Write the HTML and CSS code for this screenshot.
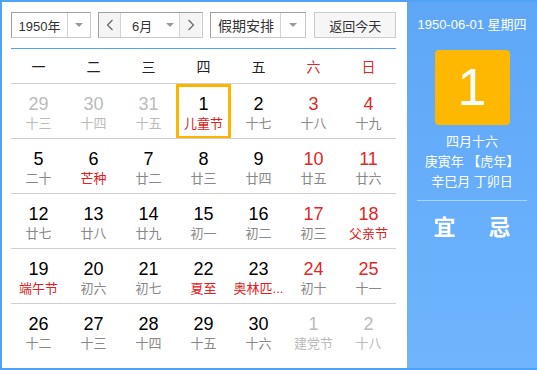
FILE: index.html
```html
<!DOCTYPE html>
<html lang="zh-CN">
<head>
    <meta charset="UTF-8">
    <title>万年历</title>
    <link rel="stylesheet" href="styles.css">
</head>
<body>
    <div class="calendar">
        <div class="main">
            <div class="toolbar">
                <div class="select year-select">
                    <span class="select-text">1950年</span>
                    <span class="select-arrow"><i class="caret"></i></span>
                </div>
                <div class="month-group">
                    <span class="nav-btn">
                        <svg width="8" height="12" viewBox="0 0 8 12"><polyline points="6.5,1 1.5,6 6.5,11" fill="none" stroke="#666" stroke-width="1.2"/></svg>
                    </span>
                    <span class="month-text">6月</span>
                    <span class="month-arrow"><i class="caret"></i></span>
                    <span class="nav-btn next">
                        <svg width="8" height="12" viewBox="0 0 8 12"><polyline points="1.5,1 6.5,6 1.5,11" fill="none" stroke="#666" stroke-width="1.2"/></svg>
                    </span>
                </div>
                <div class="select holiday-select">
                    <span class="select-text">假期安排</span>
                    <span class="select-arrow"><i class="caret"></i></span>
                </div>
                <button class="today-btn">返回今天</button>
            </div>

            <div class="grid">
                <div class="weekdays">
                    <span>一</span><span>二</span><span>三</span><span>四</span><span>五</span>
                    <span class="red">六</span><span class="red">日</span>
                </div>

                <div class="week">
                    <div class="day other"><b>29</b><small>十三</small></div>
                    <div class="day other"><b>30</b><small>十四</small></div>
                    <div class="day other"><b>31</b><small>十五</small></div>
                    <div class="day selected"><b>1</b><small class="fest">儿童节</small></div>
                    <div class="day"><b>2</b><small>十七</small></div>
                    <div class="day weekend"><b>3</b><small>十八</small></div>
                    <div class="day weekend"><b>4</b><small>十九</small></div>
                </div>
                <div class="week">
                    <div class="day"><b>5</b><small>二十</small></div>
                    <div class="day"><b>6</b><small class="fest">芒种</small></div>
                    <div class="day"><b>7</b><small>廿二</small></div>
                    <div class="day"><b>8</b><small>廿三</small></div>
                    <div class="day"><b>9</b><small>廿四</small></div>
                    <div class="day weekend"><b>10</b><small>廿五</small></div>
                    <div class="day weekend"><b>11</b><small>廿六</small></div>
                </div>
                <div class="week">
                    <div class="day"><b>12</b><small>廿七</small></div>
                    <div class="day"><b>13</b><small>廿八</small></div>
                    <div class="day"><b>14</b><small>廿九</small></div>
                    <div class="day"><b>15</b><small>初一</small></div>
                    <div class="day"><b>16</b><small>初二</small></div>
                    <div class="day weekend"><b>17</b><small>初三</small></div>
                    <div class="day weekend"><b>18</b><small class="fest">父亲节</small></div>
                </div>
                <div class="week">
                    <div class="day"><b>19</b><small class="fest">端午节</small></div>
                    <div class="day"><b>20</b><small>初六</small></div>
                    <div class="day"><b>21</b><small>初七</small></div>
                    <div class="day"><b>22</b><small class="fest">夏至</small></div>
                    <div class="day"><b>23</b><small class="fest">奥林匹...</small></div>
                    <div class="day weekend"><b>24</b><small>初十</small></div>
                    <div class="day weekend"><b>25</b><small>十一</small></div>
                </div>
                <div class="week">
                    <div class="day"><b>26</b><small>十二</small></div>
                    <div class="day"><b>27</b><small>十三</small></div>
                    <div class="day"><b>28</b><small>十四</small></div>
                    <div class="day"><b>29</b><small>十五</small></div>
                    <div class="day"><b>30</b><small>十六</small></div>
                    <div class="day other"><b>1</b><small>建党节</small></div>
                    <div class="day other"><b>2</b><small>十八</small></div>
                </div>
            </div>
        </div>

        <div class="side">
            <div class="side-date">1950-06-01 星期四</div>
            <div class="big-day">1</div>
            <div class="lunar">
                <div>四月十六</div>
                <div>庚寅年 【虎年】</div>
                <div>辛巳月 丁卯日</div>
            </div>
            <div class="side-line"></div>
            <div class="yi-ji"><span>宜</span><span>忌</span></div>
        </div>
    </div>
</body>
</html>
```

FILE: styles.css
```css
* {
    box-sizing: border-box;
}

body {
    margin: 0;
    font-family: "Liberation Sans", Arial, "Noto Sans CJK SC", sans-serif;
    color: #333;
    background: #fff;
}

.calendar {
    display: flex;
    width: 537px;
    height: 370px;
    border: 2px solid #4fa2f6;
    border-right: none;
}

.main {
    width: 405px;
    padding: 10px 11px 0 9px;
    background: #fff;
}

/* toolbar */
.toolbar {
    display: flex;
    height: 26px;
    font-size: 13px;
}

.select {
    display: flex;
    height: 26px;
    border: 1px solid #c8c8c8;
    border-top-color: #a0a0a0;
    border-left-color: #a0a0a0;
    background: #fff;
}

.select-text {
    display: flex;
    align-items: center;
    justify-content: center;
    border-right: 1px solid #d4d4d4;
}

.select-arrow {
    display: flex;
    align-items: center;
    justify-content: center;
}

.caret {
    width: 0;
    height: 0;
    border-left: 4px solid transparent;
    border-right: 4px solid transparent;
    border-top: 4px solid #999;
}

.year-select {
    width: 80px;
}

.year-select .select-text {
    width: 56px;
}

.year-select .select-arrow {
    width: 22px;
}

.month-group {
    display: flex;
    width: 106px;
    height: 26px;
    margin-left: 7px;
    border: 1px solid #c8c8c8;
    border-top-color: #a0a0a0;
    border-left-color: #a0a0a0;
}

.nav-btn {
    display: flex;
    align-items: center;
    justify-content: center;
    width: 22px;
    background: #f4f4f4;
    border-right: 1px solid #d4d4d4;
}

.nav-btn.next {
    border-right: none;
    border-left: 1px solid #d4d4d4;
}

.month-text {
    display: flex;
    align-items: center;
    padding-left: 11px;
    width: 40px;
}

.month-arrow {
    display: flex;
    align-items: center;
    justify-content: center;
    width: 18px;
}

.holiday-select {
    width: 96px;
    margin-left: 7px;
}

.holiday-select .select-text {
    width: 70px;
    font-size: 14px;
}

.holiday-select .select-arrow {
    width: 24px;
}

.today-btn {
    width: 82px;
    height: 26px;
    margin-left: 8px;
    padding: 0;
    border: 1px solid #ccc;
    background: #f6f6f6;
    color: #333;
    font-family: inherit;
    font-size: 13px;
}

/* grid */
.grid {
    margin-top: 10px;
    border-top: 1px solid #4fa2f6;
}

.weekdays {
    display: grid;
    grid-template-columns: repeat(7, 55px);
    height: 34px;
    align-items: center;
    font-size: 14px;
    text-align: center;
    color: #222;
}

.red {
    color: #e02828;
}

.week {
    display: grid;
    grid-template-columns: repeat(7, 55px);
    height: 55px;
    border-top: 1px solid #cfcfcf;
}

.day {
    display: flex;
    flex-direction: column;
    align-items: center;
    padding-top: 10px;
}

.day b {
    font-weight: normal;
    font-size: 18px;
    line-height: 20px;
    color: #000;
}

.day small {
    font-size: 13px;
    line-height: 17px;
    margin-top: 1px;
    color: #888;
    white-space: nowrap;
}

.day.weekend b {
    color: #e02828;
}

.day small.fest {
    color: #e02020;
}

.day.other b,
.day.other small {
    color: #bbb;
}

.day.selected {
    border: 3px solid #ffb400;
    border-bottom-width: 2px;
    padding-top: 7px;
}

/* side panel */
.side {
    flex: 1;
    display: flex;
    flex-direction: column;
    align-items: center;
    background: linear-gradient(#5ea7f7, #6eb5fd);
    color: #fff;
    padding-top: 13px;
}

.side-date {
    font-size: 13px;
    line-height: 20px;
}

.big-day {
    width: 75px;
    height: 75px;
    margin-top: 15px;
    border-radius: 4px;
    background: #ffb800;
    font-size: 52px;
    line-height: 75px;
    text-align: center;
}

.lunar {
    margin-top: 7px;
    font-size: 13px;
    line-height: 20px;
    text-align: center;
}

.side-line {
    width: 110px;
    height: 1px;
    margin-top: 8px;
    background: rgba(255, 255, 255, 0.45);
}

.yi-ji {
    display: flex;
    margin-top: 12px;
    font-size: 22px;
    line-height: 30px;
    font-weight: bold;
}

.yi-ji span {
    width: 55px;
    text-align: center;
}
```
